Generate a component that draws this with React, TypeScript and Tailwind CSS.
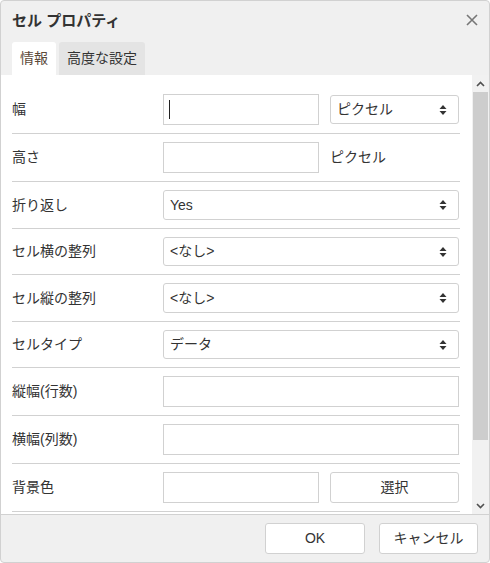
import React from "react";

const font = { fontFamily: '"Liberation Sans", "Noto Sans CJK JP", sans-serif' };

const SelectArrow: React.FC = () => (
  <svg width="8" height="11" viewBox="0 0 8 11" className="absolute right-[11px] top-1/2 -translate-y-1/2">
    <path d="M4 0.5 L7.5 4.5 L0.5 4.5 Z" fill="#333" />
    <path d="M4 10.5 L7.5 6.5 L0.5 6.5 Z" fill="#333" />
  </svg>
);

const FakeSelect: React.FC<{ value: string; className?: string }> = ({ value, className }) => (
  <div
    className={
      "relative border border-[#d1d1d1] rounded-[3px] bg-white flex items-center px-[6px] text-[14px] text-[#333] " +
      (className ?? "")
    }
  >
    {value}
    <SelectArrow />
  </div>
);

const TextBox: React.FC<{ className?: string; caret?: boolean }> = ({ className, caret }) => (
  <div className={"h-[31px] border border-[#d1d1d1] bg-white flex items-center px-[5px] " + (className ?? "")}>
    {caret && <div className="w-px h-[19px] bg-[#222]" />}
  </div>
);

interface Row {
  label: string;
  body: React.ReactNode;
}

const rows: Row[] = [
  {
    label: "幅",
    body: (
      <div className="flex items-center gap-[11px]">
        <TextBox className="w-[156px]" caret />
        <FakeSelect value="ピクセル" className="w-[129px] h-[29px]" />
      </div>
    ),
  },
  {
    label: "高さ",
    body: (
      <div className="flex items-center gap-[11px]">
        <TextBox className="w-[156px]" />
        <span className="text-[14px] text-[#333]">ピクセル</span>
      </div>
    ),
  },
  { label: "折り返し", body: <FakeSelect value="Yes" className="w-[296px] h-[30px]" /> },
  { label: "セル横の整列", body: <FakeSelect value="<なし>" className="w-[296px] h-[29px]" /> },
  { label: "セル縦の整列", body: <FakeSelect value="<なし>" className="w-[296px] h-[30px]" /> },
  { label: "セルタイプ", body: <FakeSelect value="データ" className="w-[296px] h-[29px]" /> },
  { label: "縦幅(行数)", body: <TextBox className="w-[296px]" /> },
  { label: "横幅(列数)", body: <TextBox className="w-[296px]" /> },
  {
    label: "背景色",
    body: (
      <div className="flex items-center gap-[11px]">
        <TextBox className="w-[156px]" />
        <button className="w-[129px] h-[31px] border border-[#d1d1d1] rounded-[3px] bg-white text-[14px] text-[#333]">
          選択
        </button>
      </div>
    ),
  },
];

const Scrollbar: React.FC = () => (
  <div className="w-[17px] bg-[#f1f1f1] flex flex-col items-center">
    <div className="h-[17px] flex items-center justify-center">
      <svg width="9" height="6" viewBox="0 0 9 6">
        <path d="M1 5 L4.5 1.5 L8 5" stroke="#505050" strokeWidth="1.6" fill="none" />
      </svg>
    </div>
    <div className="w-[15px] h-[348px] bg-[#cdcdcd]" />
    <div className="flex-1" />
    <div className="h-[17px] flex items-center justify-center">
      <svg width="9" height="6" viewBox="0 0 9 6">
        <path d="M1 1 L4.5 4.5 L8 1" stroke="#505050" strokeWidth="1.6" fill="none" />
      </svg>
    </div>
  </div>
);

export default function App() {
  return (
    <div style={font} className="w-[490px] h-[563px] flex flex-col bg-[#f0f0f0] border border-[#d1d1d1] rounded-[4px] overflow-hidden">
      <div className="flex items-center justify-between pl-[11px] pr-[10px] h-[40px]">
        <span className="text-[15px] font-bold text-[#333]">セル プロパティ</span>
        <svg width="14" height="14" viewBox="0 0 14 14" className="mt-[-3px]">
          <path d="M2 2 L12 12 M12 2 L2 12" stroke="#777" strokeWidth="1.6" />
        </svg>
      </div>
      <div className="flex items-end gap-[3px] pl-[11px] h-[34px]">
        <div className="h-[33px] px-[8px] flex items-center bg-white rounded-t-[3px] text-[14px] text-[#5b4a3a]">
          情報
        </div>
        <div className="h-[33px] px-[8px] flex items-center bg-[#e4e4e4] rounded-t-[3px] text-[14px] text-[#333]">
          高度な設定
        </div>
      </div>
      <div className="flex-1 bg-white flex overflow-hidden">
        <div className="flex-1 pl-[11px] pr-[12px] pt-[11px]">
          {rows.map(r => (
            <div key={r.label} className="flex items-center py-2 border-b border-[#d1d1d1]">
              <div className="w-[151px] text-[14px] text-[#333]">{r.label}</div>
              {r.body}
            </div>
          ))}
        </div>
        <Scrollbar />
      </div>
      <div className="h-[48px] border-t border-[#d1d1d1] flex items-center justify-end gap-[14px] pr-[11px]">
        <button className="w-[100px] h-[31px] border border-[#d1d1d1] rounded-[3px] bg-white text-[14px] text-[#333]">
          OK
        </button>
        <button className="w-[99px] h-[31px] border border-[#d1d1d1] rounded-[3px] bg-white text-[14px] text-[#333]">
          キャンセル
        </button>
      </div>
    </div>
  );
}
